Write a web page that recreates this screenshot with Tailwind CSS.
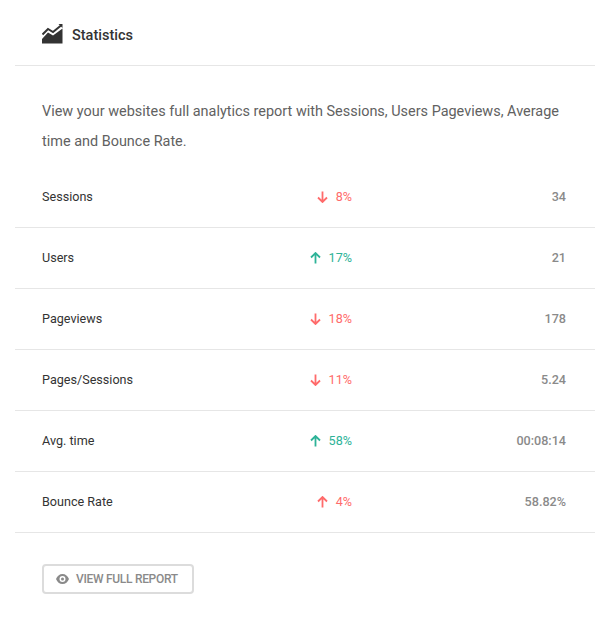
<!DOCTYPE html>
<html lang="en">
  <head>
    <meta charset="UTF-8" />
    <title>Statistics</title>
    <script src="https://cdn.jsdelivr.net/npm/@tailwindcss/browser@4"></script>
  </head>
  <body class="bg-white font-[Roboto,sans-serif]">
    <div class="mx-[15px] h-[619px]">
      <!-- Header -->
      <div class="flex items-center h-[66px] pl-[27px] border-b border-[#e6e6e6]">
        <svg class="w-[21px] h-[21px] mr-[9px] mt-[1px]" viewBox="0 0 21 21">
          <path d="M0 20.5 V16 L6 9.5 L11 12.5 L20.5 5.5 V20.5 Z" fill="#333"/>
          <path d="M0.5 11.5 L6 6 L11 9 L19 2.5" fill="none" stroke="#333" stroke-width="2"/>
          <path d="M16.5 1 H20.5 V5 Z" fill="#333"/>
        </svg>
        <h3 class="mt-[6px] text-[14.5px] font-medium text-[#333]">Statistics</h3>
      </div>

      <!-- Description -->
      <p class="pl-[27px] pr-[20px] pt-[31px] pb-[11px] text-[14.45px] leading-[30px] text-[#616161]">
        View your websites full analytics report with Sessions, Users Pageviews, Average time and Bounce Rate.
      </p>

      <!-- Rows -->
      <div class="text-[12.6px]">
        <div class="grid grid-cols-[240px_70px_1fr] items-center h-[61px] pl-[27px] pr-[29px] border-b border-[#e6e6e6] -mt-[1px]">
          <span class="text-[#333]">Sessions</span>
          <span class="flex items-center justify-end gap-[8px] text-[#ff6b6b]">
            <svg class="w-[11px] h-[12px]" viewBox="0 0 11 12" fill="none" stroke="#ff6b6b" stroke-width="1.8"><path d="M5.5 0.5 V11 M1 6.5 L5.5 11 L10 6.5"/></svg>
            8%
          </span>
          <span class="text-right font-medium text-[#8a8a8a]">34</span>
        </div>
        <div class="grid grid-cols-[240px_70px_1fr] items-center h-[61px] pl-[27px] pr-[29px] border-b border-[#e6e6e6]">
          <span class="text-[#333]">Users</span>
          <span class="flex items-center justify-end gap-[8px] text-[#2eb398]">
            <svg class="w-[11px] h-[12px]" viewBox="0 0 11 12" fill="none" stroke="#2eb398" stroke-width="1.8"><path d="M5.5 11.5 V1 M1 5.5 L5.5 1 L10 5.5"/></svg>
            17%
          </span>
          <span class="text-right font-medium text-[#8a8a8a]">21</span>
        </div>
        <div class="grid grid-cols-[240px_70px_1fr] items-center h-[61px] pl-[27px] pr-[29px] border-b border-[#e6e6e6]">
          <span class="text-[#333]">Pageviews</span>
          <span class="flex items-center justify-end gap-[8px] text-[#ff6b6b]">
            <svg class="w-[11px] h-[12px]" viewBox="0 0 11 12" fill="none" stroke="#ff6b6b" stroke-width="1.8"><path d="M5.5 0.5 V11 M1 6.5 L5.5 11 L10 6.5"/></svg>
            18%
          </span>
          <span class="text-right font-medium text-[#8a8a8a]">178</span>
        </div>
        <div class="grid grid-cols-[240px_70px_1fr] items-center h-[61px] pl-[27px] pr-[29px] border-b border-[#e6e6e6]">
          <span class="text-[#333]">Pages/Sessions</span>
          <span class="flex items-center justify-end gap-[8px] text-[#ff6b6b]">
            <svg class="w-[11px] h-[12px]" viewBox="0 0 11 12" fill="none" stroke="#ff6b6b" stroke-width="1.8"><path d="M5.5 0.5 V11 M1 6.5 L5.5 11 L10 6.5"/></svg>
            11%
          </span>
          <span class="text-right font-medium text-[#8a8a8a]">5.24</span>
        </div>
        <div class="grid grid-cols-[240px_70px_1fr] items-center h-[61px] pl-[27px] pr-[29px] border-b border-[#e6e6e6]">
          <span class="text-[#333]">Avg. time</span>
          <span class="flex items-center justify-end gap-[8px] text-[#2eb398]">
            <svg class="w-[11px] h-[12px]" viewBox="0 0 11 12" fill="none" stroke="#2eb398" stroke-width="1.8"><path d="M5.5 11.5 V1 M1 5.5 L5.5 1 L10 5.5"/></svg>
            58%
          </span>
          <span class="text-right font-medium text-[#8a8a8a]">00:08:14</span>
        </div>
        <div class="grid grid-cols-[240px_70px_1fr] items-center h-[61px] pl-[27px] pr-[29px] border-b border-[#e6e6e6]">
          <span class="text-[#333]">Bounce Rate</span>
          <span class="flex items-center justify-end gap-[8px] text-[#ff6b6b]">
            <svg class="w-[11px] h-[12px]" viewBox="0 0 11 12" fill="none" stroke="#ff6b6b" stroke-width="1.8"><path d="M5.5 11.5 V1 M1 5.5 L5.5 1 L10 5.5"/></svg>
            4%
          </span>
          <span class="text-right font-medium text-[#8a8a8a]">58.82%</span>
        </div>
      </div>

      <!-- Button -->
      <div class="pl-[27px] pt-[31px]">
        <button class="flex items-center gap-[7px] w-[152px] h-[30px] pl-[12px] border-2 border-[#dcdcdc] rounded-[4px] text-[12px] tracking-[-0.3px] font-medium text-[#8a8a8a]">
          <svg class="w-[13px] h-[10px]" viewBox="0 0 13 10">
            <path fill-rule="evenodd" fill="#8a8a8a" d="M6.5 0 C9.5 0 11.8 2 13 5 C11.8 8 9.5 10 6.5 10 C3.5 10 1.2 8 0 5 C1.2 2 3.5 0 6.5 0 Z M6.5 2 A3 3 0 1 0 6.5 8 A3 3 0 1 0 6.5 2 Z M6.5 3.5 A1.5 1.5 0 1 1 6.5 6.5 A1.5 1.5 0 1 1 6.5 3.5 Z"/>
          </svg>
          VIEW FULL REPORT
        </button>
      </div>
    </div>
  </body>
</html>
